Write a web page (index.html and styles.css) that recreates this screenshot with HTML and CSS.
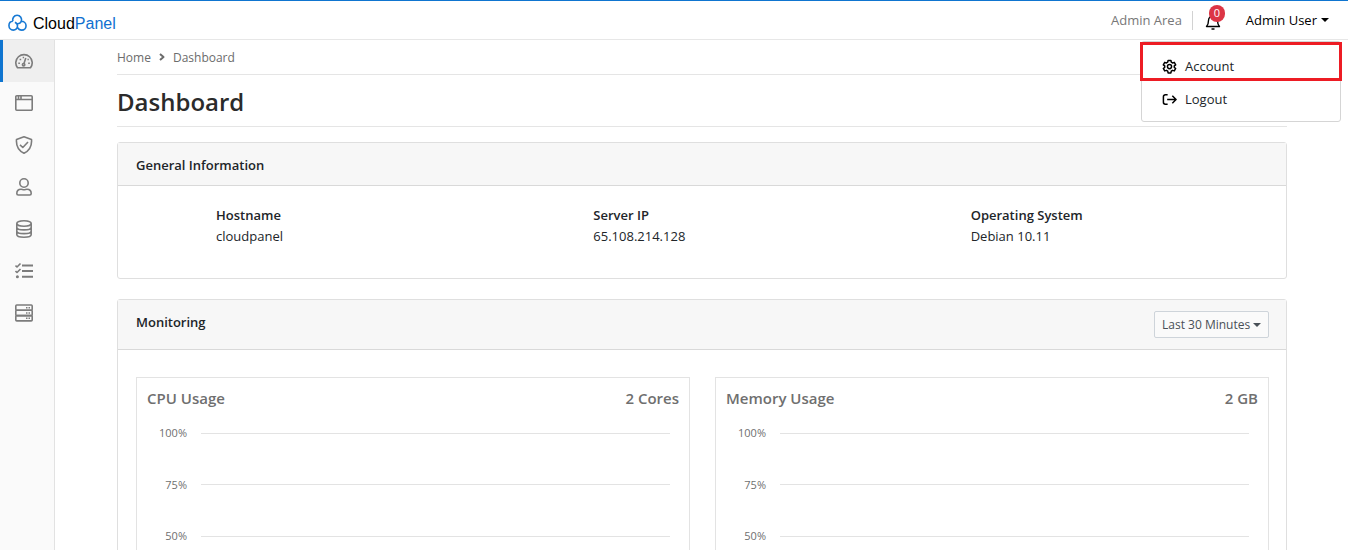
FILE: index.html
```html
<!DOCTYPE html>
<html lang="en">
<head>
<meta charset="utf-8">
<title>Dashboard - CloudPanel</title>
<link rel="stylesheet" href="styles.css">
</head>
<body>
<header class="topbar">
  <a class="brand" href="#">
    <svg class="brand-logo" viewBox="0 0 20 18" aria-hidden="true"><path d="M5.200 7.200A4.700 4.700 0 1 1 14 7.200C13.200 9.200 11.500 10 9.500 9.800M5.200 7.200C2.600 7.300 1 9.300 1 11.700 1 14.300 3 16.500 5.500 16.500 8.100 16.500 10 14.500 10 12 10 10.300 9 8.800 7.300 8.100M14 7.200C16.800 7.200 19 9.200 19 11.900 19 14.500 17 16.500 14.500 16.500 12.600 16.500 11 15.500 10.200 13.800"/></svg>
    <span>Cloud<span class="brand-accent">Panel</span></span>
  </a>
  <nav class="top-nav" aria-label="Account">
    <a class="area-link" href="#">Admin Area</a>
    <button class="bell" type="button" aria-label="Notifications">
      <svg viewBox="0 0 16 18" aria-hidden="true"><path d="M1.500 13.500C3 12 3.500 10.500 3.500 7.500a4.500 4.500 0 0 1 9 0c0 3 .5 4.500 2 6zM6.500 16h3M8 3V1.500"/></svg>
      <span class="badge">0</span>
    </button>
    <button class="user-toggle" type="button" aria-expanded="true">Admin User<span class="caret"></span></button>
  </nav>
  <div class="user-menu">
    <a class="menu-item marked" href="#">
      <svg viewBox="0 0 16 16" aria-hidden="true"><path d="M6.500 1.500h3l.4 1.900 1.300.8 1.900-.6 1.500 2.600-1.500 1.200v1.500l1.500 1.200-1.500 2.600-1.900-.6-1.300.8-.4 1.900h-3l-.4-1.900-1.300-.8-1.900.6L1.400 10.100l1.500-1.200V7.400L1.400 6.200l1.500-2.600 1.900.6 1.300-.8z"/><circle cx="8" cy="8.100" r="2.200"/></svg>
      Account
    </a>
    <a class="menu-item" href="#">
      <svg viewBox="0 0 16 16" aria-hidden="true"><path d="M6 3H3.500A2 2 0 0 0 1.500 5v6a2 2 0 0 0 2 2H6M5.500 8H15M11 4l4 4-4 4"/></svg>
      Logout
    </a>
  </div>
</header>
<div class="layout">
  <nav class="sidebar" aria-label="Main">
    <a class="side-link active" href="#" aria-label="Dashboard"><svg viewBox="0 0 18 18"><path d="M2.500 15.800A8.200 8.200 0 1 1 15.500 15.800zM8.800 12 10.800 6"/><circle cx="8.600" cy="12.700" r="1.200"/><path d="M3.300 11.300h1.600M4.600 7.500h1.600M7.700 5.500h1.400M12.500 7.500h1.300M13.200 11.300h1.600"/></svg></a>
    <a class="side-link" href="#" aria-label="Sites"><svg viewBox="0 0 18 18"><path d="M1.800 1.800h14.400a1 1 0 0 1 1 1v12.400a1 1 0 0 1-1 1H1.800a1 1 0 0 1-1-1V2.800a1 1 0 0 1 1-1zM1 5.500h16M3.500 2v3M6 2v3"/></svg></a>
    <a class="side-link" href="#" aria-label="Security"><svg viewBox="0 0 18 18"><path d="M9 .8 16.500 3.500C17 9.500 14.500 14.500 9 17.200 3.500 14.500 1 9.500 1.500 3.500zM5 8.800l2.800 2.700L13 6"/></svg></a>
    <a class="side-link" href="#" aria-label="Users"><svg viewBox="0 0 18 18"><circle cx="9" cy="5" r="4.200"/><path d="M1.800 15.500c0-3 1.700-4.300 4.200-4.300 1.200 0 1.700.5 3 .5s1.800-.5 3-.5c2.500 0 4.200 1.300 4.200 4.300a1.500 1.500 0 0 1-1.500 1.500H3.300a1.500 1.500 0 0 1-1.500-1.500z"/></svg></a>
    <a class="side-link" href="#" aria-label="Databases"><svg viewBox="0 0 18 18"><ellipse cx="9" cy="3.500" rx="7.200" ry="2.700"/><path d="M1.800 3.500v11c0 3.600 14.400 3.600 14.400 0v-11M1.800 7.200c0 3.600 14.400 3.600 14.400 0M1.800 10.900c0 3.600 14.400 3.600 14.400 0"/></svg></a>
    <a class="side-link" href="#" aria-label="Tasks"><svg viewBox="0 0 18 18"><path d="M.5 3.500 2 5l3.500-3.500M.5 9 2 10.500 5.500 7"/><path class="bars" d="M7 3.500h11M7 9h11M7 14.700h11"/><circle class="fill" cx="2.400" cy="14.700" r="1.500"/></svg></a>
    <a class="side-link" href="#" aria-label="Server"><svg viewBox="0 0 18 18"><rect x=".8" y="1" width="16.400" height="5.300" rx="1"/><rect x=".8" y="6.300" width="16.400" height="5.300" rx="1"/><rect x=".8" y="11.600" width="16.400" height="5.300" rx="1"/><path d="M11 3.700h1.500M13.500 3.700H15M11 9h1.500M13.500 9H15M11 14.300h1.500M13.500 14.300H15"/></svg></a>
  </nav>
  <main class="content">
    <nav class="breadcrumb" aria-label="Breadcrumb">
      <a href="#">Home</a>
      <svg viewBox="0 0 6 8" aria-hidden="true"><path d="M1 1l3.500 3L1 7"/></svg>
      <span class="current">Dashboard</span>
    </nav>
    <h1 class="page-title">Dashboard</h1>
    <section class="card">
      <h2 class="card-header">General Information</h2>
      <dl class="info">
        <div><dt>Hostname</dt><dd>cloudpanel</dd></div>
        <div><dt>Server IP</dt><dd>65.108.214.128</dd></div>
        <div><dt>Operating System</dt><dd>Debian 10.11</dd></div>
      </dl>
    </section>
    <section class="card">
      <div class="card-header tall">
        <h2>Monitoring</h2>
        <div class="period">
          <select aria-label="Period"><option>Last 30 Minutes</option></select>
          <span class="caret"></span>
        </div>
      </div>
      <div class="charts">
        <article class="chart">
          <div class="chart-head"><h3>CPU Usage</h3><span>2 Cores</span></div>
          <div class="plot">
            <div class="tick"><span>100%</span></div>
            <div class="tick"><span>75%</span></div>
            <div class="tick"><span>50%</span></div>
          </div>
        </article>
        <article class="chart">
          <div class="chart-head"><h3>Memory Usage</h3><span>2 GB</span></div>
          <div class="plot">
            <div class="tick"><span>100%</span></div>
            <div class="tick"><span>75%</span></div>
            <div class="tick"><span>50%</span></div>
          </div>
        </article>
      </div>
    </section>
  </main>
</div>
</body>
</html>
```
FILE: styles.css
```css
* { box-sizing: border-box; }
body {
  margin: 0;
  height: 100vh;
  display: flex;
  flex-direction: column;
  overflow: hidden;
  background: #fff;
  color: #212529;
  font: 13px/21px "Segoe UI", "Open Sans", "Noto Sans", sans-serif;
}
a { color: inherit; text-decoration: none; }
h1, h2, h3, dl, dd { margin: 0; }
button, select { font: inherit; color: inherit; }
button { padding: 0; border: 0; background: none; }
svg { fill: none; stroke: currentColor; stroke-linejoin: round; }

.topbar {
  position: relative;
  z-index: 1;
  flex: none;
  height: 40px;
  display: flex;
  align-items: center;
  justify-content: space-between;
  padding: 0 19px 0 8px;
  border-top: 1px solid #0f75d0;
  border-bottom: 1px solid #e7e7e7;
}
.brand {
  display: flex;
  align-items: center;
  gap: 6px;
  padding-top: 6px;
  color: #000;
  font-family: Arial, "Liberation Sans", sans-serif;
  font-size: 16px;
}
.brand-logo { width: 19px; height: 18px; stroke: #1779d4; stroke-width: 1.7; }
.brand-accent { color: #1070d0; }
.top-nav { display: flex; align-items: center; color: #000; }
.area-link {
  padding-right: 10px;
  border-right: 1px solid #d2d2d2;
  line-height: 19px;
  color: #777;
}
.bell { position: relative; margin: 4px 25px 0 12px; width: 16px; height: 18px; }
.bell svg { display: block; width: 16px; height: 18px; stroke-width: 1.4; }
.badge {
  position: absolute;
  top: -8px;
  left: 4px;
  width: 16px;
  height: 17px;
  border-radius: 9px;
  background: #dc3545;
  color: #fff;
  font-size: 11px;
  line-height: 16px;
}
.caret {
  display: inline-block;
  border: 4px solid transparent;
  border-top-color: currentColor;
  border-bottom: 0;
}
.user-toggle { display: flex; align-items: center; gap: 4px; }
.user-menu {
  position: absolute;
  top: 40px;
  right: 7px;
  width: 200px;
  padding: 8px 0 5px;
  border: 1px solid #d5d5d5;
  border-radius: 3px;
  background: #fff;
}
.menu-item {
  position: relative;
  display: flex;
  align-items: center;
  gap: 8px;
  height: 33px;
  padding: 0 20px;
}
.menu-item svg { width: 15px; height: 15px; color: #000; stroke-width: 1.6; }
.marked::after {
  content: "";
  position: absolute;
  inset: -8px -2px 2px;
  border: 3px solid #ed1c24;
}

.layout { flex: 1; min-height: 0; display: flex; }
.sidebar {
  flex: none;
  width: 55px;
  border-right: 1px solid #e2e2e2;
  background: #fafafa;
}
.side-link {
  display: flex;
  align-items: center;
  height: 42px;
  padding-left: 15px;
  color: #7c7c7c;
}
.side-link svg { width: 18px; height: 18px; stroke-width: 1.6; }
.side-link .bars { stroke-width: 2; }
.side-link .fill { fill: currentColor; stroke: none; }
.active { padding-left: 12px; border-left: 3px solid #0f75d0; background: #efefef; }

.content {
  flex: 1;
  min-width: 0;
  padding: 0 61px 20px 62px;
  overflow-y: auto;
  scrollbar-width: none;
}
.breadcrumb {
  display: flex;
  align-items: center;
  gap: 8px;
  height: 35px;
  border-bottom: 1px solid #e5e5e5;
  color: #6c6c6c;
  font-size: 12px;
}
.breadcrumb svg { width: 6px; height: 8px; stroke-width: 2; }
.current { font-weight: 500; }
.page-title {
  height: 52px;
  margin-bottom: 15px;
  border-bottom: 1px solid #e5e5e5;
  color: #2b2b2b;
  font-size: 24px;
  font-weight: 600;
  line-height: 54px;
}
.card {
  margin-bottom: 20px;
  border: 1px solid #dfdfdf;
  border-radius: 3px;
}
.card-header {
  height: 43px;
  padding: 0 17px 0 18px;
  border-bottom: 1px solid #d9d9d9;
  background: #f7f7f7;
  font-size: 13px;
  font-weight: 600;
  line-height: 44px;
}
.tall { display: flex; align-items: flex-start; justify-content: space-between; height: 50px; }
.tall h2 { font-size: 13px; font-weight: 600; }
.info {
  display: grid;
  grid-template-columns: repeat(3, 1fr);
  padding: 19px 18px 31px;
}
.info div { padding-left: 80px; }
.info dt { font-weight: 600; }
.period {
  position: relative;
  display: flex;
  align-items: center;
  margin-top: 11px;
  color: #495057;
  font-weight: 400;
  line-height: 21px;
}
.period select {
  appearance: none;
  width: 115px;
  height: 27px;
  padding: 0 7px;
  border: 1px solid #ced4da;
  border-radius: 2px;
  background: #fafafa;
  font-size: 12px;
}
.period .caret { position: absolute; right: 8px; }
.charts {
  display: grid;
  grid-template-columns: 1fr 1fr;
  gap: 25px;
  padding: 27px 17px 18px 18px;
}
.chart { padding: 10px 10px 20px; border: 1px solid #e3e3e3; color: #6f6f6f; }
.chart-head { display: flex; justify-content: space-between; font-size: 15px; font-weight: 600; }
.chart-head h3 { font-size: 15px; font-weight: 600; }
.plot {
  display: flex;
  flex-direction: column;
  justify-content: space-between;
  height: 117px;
  margin: 17px 9px 0 0;
}
.tick {
  display: grid;
  grid-template-columns: 40px 1fr;
  align-items: center;
  gap: 14px;
  height: 14px;
  font-size: 11px;
  line-height: 14px;
  text-align: right;
}
.tick::after { content: ""; border-top: 1px solid #e3e3e3; }
```
